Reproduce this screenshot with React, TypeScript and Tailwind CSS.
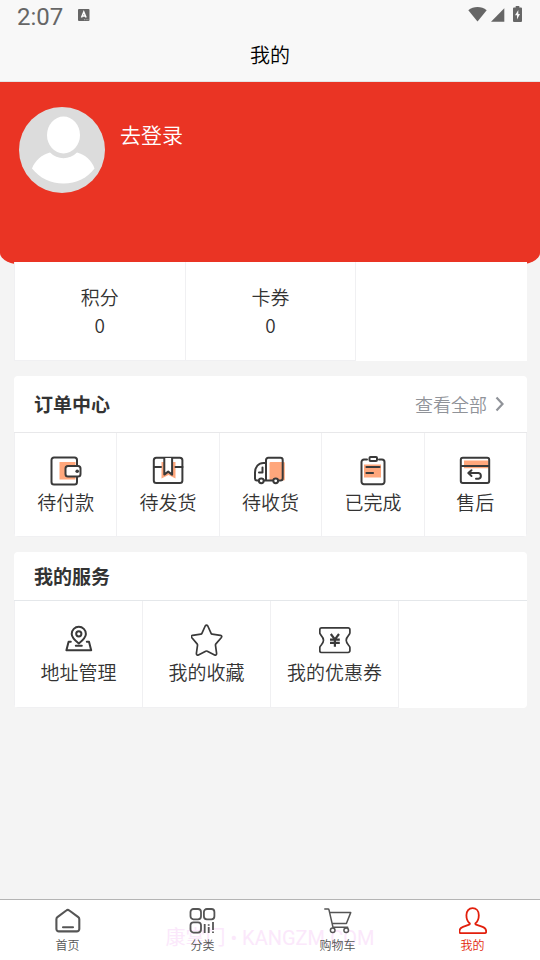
import type { ReactNode } from "react";
import clsx from "clsx";

type Tile = { label: string; icon: ReactNode };

/** Line icons inside the cards share one 32px box. */
function TileIcon({ children }: { children: ReactNode }) {
  return (
    <svg
      viewBox="0 0 32 32"
      className="size-8"
      fill="none"
      stroke="#3a3a3a"
      strokeWidth="2"
      strokeLinecap="round"
      strokeLinejoin="round"
      aria-hidden="true"
    >
      {children}
    </svg>
  );
}

function TabIcon({ children }: { children: ReactNode }) {
  return (
    <svg
      viewBox="0 0 28 28"
      className="size-7"
      fill="none"
      stroke="currentColor"
      strokeWidth="1.8"
      strokeLinecap="round"
      strokeLinejoin="round"
      aria-hidden="true"
    >
      {children}
    </svg>
  );
}

const STATS = [
  { label: "积分", value: 0 },
  { label: "卡券", value: 0 }
];

const ORDERS: Tile[] = [
  {
    label: "待付款",
    icon: (
      <TileIcon>
        <path d="M9.500 7h16v17.500h-16z" fill="#ffa77c" stroke="none" />
        <path d="M27 10.500V5a2.500 2.500 0 0 0-2.500-2.500H4A2.500 2.500 0 0 0 1.500 5v22A2.500 2.500 0 0 0 4 29.500h20.500A2.500 2.500 0 0 0 27 27v-5" />
        <rect x="15.500" y="11" width="15" height="10.500" rx="2.500" fill="#fff" />
        <circle cx="27.200" cy="16.300" r="1.800" fill="#3a3a3a" stroke="none" />
      </TileIcon>
    )
  },
  {
    label: "待发货",
    icon: (
      <TileIcon>
        <path d="M9.500 7h14v16.500l-7-3.500-7 3.500z" fill="#ffa77c" stroke="none" />
        <rect x="1.800" y="2.800" width="28.600" height="25.200" rx="2.500" />
        <path d="M2 12h7M23.500 12h7" />
        <path d="M12.300 3v16.600l3.900-3 3.900 3V3" fill="#fff" />
      </TileIcon>
    )
  },
  {
    label: "待收货",
    icon: (
      <TileIcon>
        <rect x="15.500" y="7" width="15.300" height="18.500" rx="1" fill="#ffa77c" stroke="none" />
        <path d="M12 25.500V5A2.200 2.200 0 0 1 14.200 2.800H26.500A2.200 2.200 0 0 1 28.700 5v18.300a2.200 2.200 0 0 1-2.200 2.200h-2M19 25.500h-9.500" />
        <path d="M12 8H9.500C4.500 8 1 12 1 17.500v6a2 2 0 0 0 2 2h1.500" />
        <path d="M8.500 12.500V17.500H5" />
        <circle cx="7.300" cy="25.800" r="2.400" fill="#fff" />
        <circle cx="21.700" cy="25.800" r="2.400" fill="#fff" />
      </TileIcon>
    )
  },
  {
    label: "已完成",
    icon: (
      <TileIcon>
        <path d="M7 9.500h17v13H7z" fill="#ffa77c" stroke="none" />
        <path d="M10 4.500H7A2.500 2.500 0 0 0 4.500 7v19.800A2.500 2.500 0 0 0 7 29.300h18a2.500 2.500 0 0 0 2.500-2.500V7A2.500 2.500 0 0 0 25 4.500h-3" />
        <rect x="12.500" y="2" width="7.500" height="4" rx="1" />
        <path d="M9.500 12h13M9.500 18H16" strokeWidth="2.200" />
      </TileIcon>
    )
  },
  {
    label: "售后",
    icon: (
      <TileIcon>
        <path d="M5 5.500h24.500v7.800H5z" fill="#ffa77c" stroke="none" />
        <rect x="1.800" y="2.800" width="28.400" height="25.200" rx="2" />
        <path d="M2 11h28" />
        <path d="M12.500 15.200l-3.200 2.900 3.200 2.900M9.500 18.100h10a2.900 2.900 0 0 1 0 5.700h-2.500" />
      </TileIcon>
    )
  }
];

const SERVICES: Tile[] = [
  {
    label: "地址管理",
    icon: (
      <TileIcon>
        <path d="M15.800 19.500c-4.500-3.700-7.100-6.400-7.100-9.600a7.100 7.100 0 0 1 14.200 0c0 3.200-2.600 5.900-7.100 9.600z" />
        <circle cx="15.800" cy="9.800" r="2.600" />
        <path d="M7.800 17.800H5.600l-2.200 8.400h24.800L26 17.800h-2.200M12.800 21.800h6" />
      </TileIcon>
    )
  },
  {
    label: "我的收藏",
    icon: (
      <TileIcon>
        <path
          d="M14.200 2Q15.500 .2 16.800 2L20.100 9.400Q20.400 10.100 21.200 10.200L29.400 11.300Q31.600 12 30.200 13.800L24.900 19.900Q24.400 20.500 24.500 21.300L25.600 29.400Q25.600 31.700 23.600 31L16.300 27.200Q15.500 26.800 14.700 27.200L7.400 31Q5.400 31.700 5.400 29.400L6.500 21.300Q6.600 20.500 6.100 19.900L.9 13.800Q-.5 12 1.600 11.300L9.800 10.200Q10.600 10.100 10.900 9.400Z"
          strokeWidth="1.700"
        />
      </TileIcon>
    )
  },
  {
    label: "我的优惠券",
    icon: (
      <TileIcon>
        <path d="M2.600 3.900h26.500a1.800 1.800 0 0 1 1.800 1.800v3.400c0 1.800-3.700 3.300-3.700 7.200s3.700 5.400 3.700 7.200v3.200a1.800 1.800 0 0 1-1.800 1.800H2.600a1.800 1.800 0 0 1-1.800-1.800v-3.200c0-1.800 3.700-3.300 3.700-7.200S.8 10.900.8 9.100V5.700a1.800 1.800 0 0 1 1.800-1.800z" strokeWidth="1.700" />
        <path d="M11.800 10l4.100 5.300L20 10M15.900 15.300v7.400M11 15.600h9.800M11 18.900h9.800" strokeWidth="2.200" strokeLinecap="butt" />
      </TileIcon>
    )
  }
];

const TABS: (Tile & { active?: boolean })[] = [
  {
    label: "首页",
    icon: (
      <TabIcon>
        <path d="M12.300 3.500 3.400 10.200a2.500 2.500 0 0 0-1 2v9.700a2.500 2.500 0 0 0 2.500 2.500h17.900a2.500 2.500 0 0 0 2.500-2.500v-9.700a2.500 2.500 0 0 0-1-2L15.300 3.500a2.400 2.400 0 0 0-3 0zM9 20.300h10" strokeWidth="2.100" />
      </TabIcon>
    )
  },
  {
    label: "分类",
    icon: (
      <TabIcon>
        <rect x="1.500" y="2" width="10.500" height="10.300" rx="3" />
        <rect x="14.900" y="2" width="10.500" height="10.300" rx="3" />
        <rect x="1.500" y="15.300" width="10.500" height="10.300" rx="3" />
        <path d="M15.700 17v9M19.700 20v6M19.700 17.200v1.500M24 15v8M24 24.500v1.500" strokeLinecap="butt" />
      </TabIcon>
    )
  },
  {
    label: "购物车",
    icon: (
      <TabIcon>
        <path d="M.8 2H4a1 1 0 0 1 1 .8L9 20.300h14.700M5.900 5.600h20.800L22.400 16.500H8.400" strokeWidth="1.500" />
        <circle cx="8.700" cy="23.300" r="2.300" strokeWidth="1.500" />
        <circle cx="22.200" cy="23.300" r="2.300" strokeWidth="1.500" />
      </TabIcon>
    )
  },
  {
    label: "我的",
    active: true,
    icon: (
      <TabIcon>
        <path
          d="M10.600 16.200C8.500 14.500 7.400 11.500 7.400 8.300c0-4.300 2.500-7.100 6.200-7.100s6.200 2.800 6.200 7.100c0 3.200-1.100 6.200-3.200 7.900-.5.500-.3 1.100.5 1.400l6.500 2.200c2.300.9 3.600 2.600 3.600 4.800 0 1.100-.6 1.500-1.500 1.500H1.900c-.9 0-1.500-.4-1.500-1.500 0-2.200 1.300-3.900 3.600-4.800l6.100-2.200c.8-.3 1-.9.500-1.400z"
          strokeWidth="1.800"
        />
      </TabIcon>
    )
  }
];

function TileButton({ label, icon, className }: Tile & { className?: string }) {
  return (
    <button
      type="button"
      className={clsx(
        "flex flex-col items-center border-r border-b border-[#f0f0f2] text-[19px] leading-[30px]",
        className
      )}
    >
      {icon}
      <span className="whitespace-nowrap">{label}</span>
    </button>
  );
}

function StatusBar() {
  return (
    <div className="flex h-8 items-center justify-between pr-[18px] pl-[17px] text-[#666]">
      <div className="flex items-center gap-[15px]">
        <span className="pt-0.5 font-[Roboto] text-2xl leading-8 font-normal">2:07</span>
        <svg viewBox="0 0 12 12" className="mb-0.5 size-3" aria-hidden="true">
          <rect width="11.500" height="12" rx="1" fill="currentColor" />
          <path d="M3.500 8.500 5.800 3l2.300 5.500M4.300 7h3" fill="none" stroke="#fff" strokeWidth="1.500" />
          <path d="M6 10.700h4.500" stroke="#ccc" strokeWidth=".7" strokeDasharray="1 .7" />
        </svg>
      </div>
      <div className="mb-1 flex items-center gap-1" aria-hidden="true">
        <svg viewBox="0 0 19 16" className="h-4 w-[19px]" fill="currentColor">
          <path d="M.3 4.300a14.500 14.500 0 0 1 18.400 0L9.500 15.500z" />
        </svg>
        <svg viewBox="0 0 14 16" className="h-4 w-3.5" fill="currentColor">
          <path d="M13.300 2.300v13.500H0z" />
        </svg>
        <svg viewBox="0 0 9 16" className="ml-1 h-4 w-[9px]" fill="currentColor">
          <path d="M2.700 0h3.600v1.500H8a1 1 0 0 1 1 1V15a1 1 0 0 1-1 1H1a1 1 0 0 1-1-1V2.500a1 1 0 0 1 1-1h1.700z" />
          <path d="M5.300 4 2 9.200h2V13.500l3-5.500H5.300z" fill="#f8f8f8" />
        </svg>
      </div>
    </div>
  );
}

function Avatar() {
  return (
    <svg viewBox="0 0 86 86" className="size-[86px] shrink-0" aria-hidden="true">
      <circle cx="43" cy="43" r="43" fill="#dcdcdc" />
      <ellipse cx="44.500" cy="28" rx="16.500" ry="18.500" fill="#fff" />
      <path d="M31 45.500c7.500 7.500 19.500 7.500 27 0 8 2 15 8 17.500 16-7 9.500-18 15-31 15s-24-5.500-31.500-15c3-8 10-14 18-16z" fill="#fff" />
    </svg>
  );
}

export default function App() {
  return (
    <div className="flex min-h-screen flex-col bg-[#f4f4f4] font-['Noto_Sans_CJK_SC',sans-serif] font-[350] text-[#333]">
      <header className="border-b border-[#e4e4e4] bg-[#f8f8f8]">
        <StatusBar />
        <h1 className="pt-1 pb-2 text-center text-xl leading-[37px] font-[350] text-black">我的</h1>
      </header>

      <main className="flex-1">
        <section className="flex h-[183px] items-start gap-[15px] rounded-b-[24px_12px] bg-[#ea3424] px-[19px] pt-[25px]">
          <Avatar />
          <a href="#login" className="pt-[11px] text-[21px] leading-8 text-white">
            去登录
          </a>
        </section>

        <div className="-mt-[3px] space-y-[15px] pr-[13px] pb-6 pl-3.5">
          <section className="grid grid-cols-3 border-l border-[#f0f0f2] bg-white">
            {STATS.map((s) => (
              <button
                key={s.label}
                type="button"
                className="border-r border-b border-[#f0f0f2] pt-[21px] pb-[21px] text-[19px] leading-7"
              >
                <span className="block">{s.label}</span>
                <span className="block">{s.value}</span>
              </button>
            ))}
          </section>

          <section className="overflow-hidden rounded-sm bg-white">
            <div className="flex items-center justify-between border-b border-[#e8e8ea] py-3 pr-[22px] pl-5">
              <h2 className="text-[19px] leading-8 font-bold">订单中心</h2>
              <a href="#orders" className="flex items-center gap-2 text-lg leading-8 text-[#909399]">
                查看全部
                <svg viewBox="0 0 10 16" className="h-4 w-2.5" fill="none" stroke="currentColor" strokeWidth="2.200" aria-hidden="true">
                  <path d="M1.500 1.500 7.500 8l-6 6.500" />
                </svg>
              </a>
            </div>
            <div className="grid grid-cols-5 border-l border-[#f0f0f2]">
              {ORDERS.map((tile) => (
                <TileButton key={tile.label} className="pt-[22px] pb-[19px]" {...tile} />
              ))}
            </div>
          </section>

          <section className="overflow-hidden rounded-sm bg-white">
            <div className="border-b border-[#e4e7ea] px-5 py-2">
              <h2 className="text-[19px] leading-8 font-bold">我的服务</h2>
            </div>
            <div className="grid grid-cols-4 border-l border-[#f0f0f2]">
              {SERVICES.map((tile) => (
                <TileButton key={tile.label} className="gap-px pt-[23px] pb-5" {...tile} />
              ))}
            </div>
          </section>
        </div>
      </main>

      <nav className="sticky bottom-0 grid grid-cols-4 border-t border-[#b4b4b4] bg-white">
        {/* faint site mark lying over the tab bar */}
        <span className="pointer-events-none absolute inset-x-0 top-6 text-center font-[Roboto,'Noto_Sans_CJK_SC',sans-serif] text-xl leading-7 font-normal whitespace-nowrap text-[#fbe8fb]">
          康掌门 • KANGZM.COM
        </span>
        {TABS.map((tab) => (
          <a
            key={tab.label}
            href="#tab"
            aria-current={tab.active ? "page" : undefined}
            className={clsx(
              "relative flex flex-col items-center pt-[7px] pb-[5px] text-xs leading-5",
              tab.active ? "text-[#e21f0c]" : "text-[#555]"
            )}
          >
            {tab.icon}
            {tab.label}
          </a>
        ))}
      </nav>
    </div>
  );
}
